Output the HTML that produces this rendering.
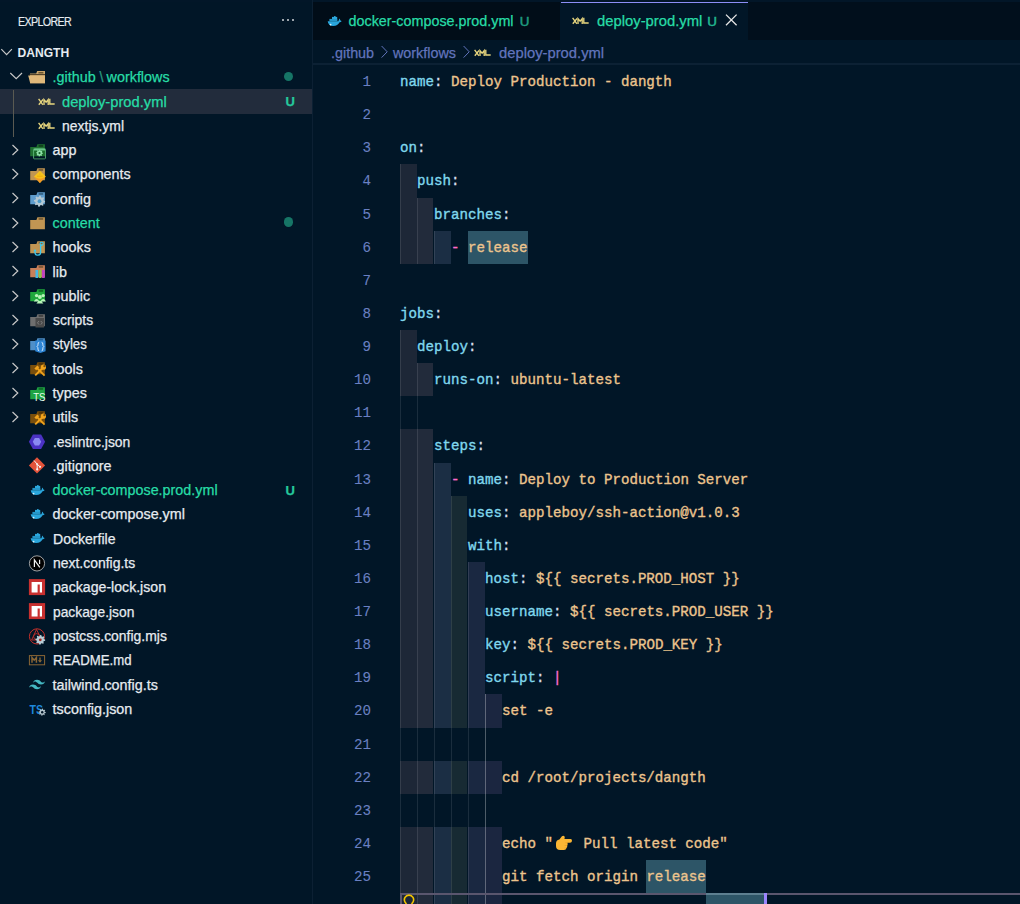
<!DOCTYPE html><html><head><meta charset="utf-8"><style>
*{margin:0;padding:0;box-sizing:border-box}
html,body{width:1020px;height:904px;overflow:hidden;background:#011627}
body{position:relative;font-family:"Liberation Sans",sans-serif}
.a{position:absolute}
svg{overflow:visible}
.sb{font-size:14.35px;white-space:pre;line-height:24.29px;color:#e6ebf0;-webkit-text-stroke:0.25px currentColor}
.code{font-family:"Liberation Mono",monospace;font-size:14.1667px;white-space:pre;line-height:33.125px;color:#d6deeb;-webkit-text-stroke:0.35px currentColor}
.ln{font-family:"Liberation Mono",monospace;font-size:14.1667px;line-height:33.125px;color:#6a80c2;text-align:right;width:60px;-webkit-text-stroke:0.1px currentColor}
.k{color:#80d8ee}.v{color:#ecc48d}.p{color:#d6deeb}.d{color:#ff6bcb}
</style></head><body><div class="a" style="left:0;top:0;width:1020px;height:2px;background:#021628"></div>
<div class="a" style="left:312px;top:0;width:1px;height:904px;background:#0c2033"></div>
<div class="a" style="left:17.5px;top:14px;font-size:12.1px;line-height:16px;letter-spacing:-0.75px;transform:scaleX(0.885);transform-origin:0 0;color:#e6ebf0;-webkit-text-stroke:0.15px currentColor">EXPLORER</div>
<div class="a" style="left:281.5px;top:19px;width:2.4px;height:2.4px;border-radius:50%;background:#d0d4da"></div>
<div class="a" style="left:286.5px;top:19px;width:2.4px;height:2.4px;border-radius:50%;background:#d0d4da"></div>
<div class="a" style="left:291.5px;top:19px;width:2.4px;height:2.4px;border-radius:50%;background:#d0d4da"></div>
<div class="a" style="left:17.5px;top:40.5px;font-size:12.1px;line-height:24px;font-weight:700;color:#e6ebf0">DANGTH</div>
<svg class="a" style="left:0;top:46px" width="14" height="12" viewBox="0 0 14 12"><path d="M1.3 3.2 L6.6 8.6 L11.9 3.2" fill="none" stroke="#c8c8c8" stroke-width="1.2"/></svg>
<div class="a" style="left:0;top:88.84px;width:312px;height:25.09px;background:#222c3c"></div>
<div class="a" style="left:13px;top:89.54px;width:1px;height:47.58px;background:#5a5a52"></div>
<svg class="a" style="left:9px;top:70.25px" width="14" height="12" viewBox="0 0 14 12"><path d="M1.3 3 L7.2 8.6 L13 3" fill="none" stroke="#c8c8c8" stroke-width="1.2"/></svg>
<svg class="a" style="left:29.00px;top:67.85px" width="18" height="18" viewBox="0 0 18 18"><path d="M1 5.6 H7.2 L8.2 3 H16 V15.2 H1 Z" fill="#c9a46a"/><rect x="9.4" y="4" width="5" height="1.5" fill="#6b5530"/><path d="M-0.8 7.4 H16 V15.2 H1.2 Z" fill="#dfb87a"/><path d="M0.4 6.6 H16" stroke="#3a2e1c" stroke-width="0.9"/></svg>
<div class="a sb" style="left:52.6px;top:65.25px;color:#27dca6">.github</div>
<div class="a sb" style="left:99.6px;top:65.25px;color:#2a9a80">\</div>
<div class="a sb" style="left:106.6px;top:65.25px;color:#27dca6">workflows</div>
<div class="a" style="left:284px;top:71.75px;width:9.2px;height:9.2px;border-radius:50%;background:#167566"></div>
<svg class="a" style="left:37.50px;top:92.14px" width="18" height="18" viewBox="0 0 18 18"><g fill="none" stroke="#e8d67e" stroke-width="1.35" stroke-linecap="square"><path d="M1 7.4 L4.4 12.2 M4.6 8 L1.2 12.2"/><path d="M6 12.2 V7.6 L8.1 10.2 L10.2 7.6 V12.2"/><path d="M11.8 7.4 V12 H16"/></g></svg>
<div class="a sb" style="left:61.8px;top:89.54px;color:#27dca6;transform:scaleX(1.0257);transform-origin:0 0">deploy-prod.yml</div>
<div class="a sb" style="left:285.6px;top:90.04px;color:#25c89c;font-weight:700;font-size:13px">U</div>
<svg class="a" style="left:37.50px;top:116.43px" width="18" height="18" viewBox="0 0 18 18"><g fill="none" stroke="#e8d67e" stroke-width="1.35" stroke-linecap="square"><path d="M1 7.4 L4.4 12.2 M4.6 8 L1.2 12.2"/><path d="M6 12.2 V7.6 L8.1 10.2 L10.2 7.6 V12.2"/><path d="M11.8 7.4 V12 H16"/></g></svg>
<div class="a sb" style="left:61.8px;top:113.83px;color:#e6ebf0;transform:scaleX(0.9731);transform-origin:0 0">nextjs.yml</div>
<svg class="a" style="left:10px;top:142.82px" width="12" height="14" viewBox="0 0 12 14"><path d="M2.5 2 L7.8 7 L2.5 12" fill="none" stroke="#c8c8c8" stroke-width="1.2"/></svg>
<svg class="a" style="left:29.00px;top:140.72px" width="18" height="18" viewBox="0 0 18 18"><path d="M1.2 5.9 H7.4 L8.4 3.3 H15.9 V15.3 H1.2 Z" fill="#1f7030"/><rect x="9.6" y="4.2" width="4.6" height="1.5" fill="#0f3a1a"/><rect x="4.6" y="7.6" width="11.8" height="10.2" rx="0.8" fill="#1a6a2a" stroke="#5cb87a" stroke-width="0.9"/><rect x="5" y="8" width="11" height="1.5" fill="#6cc88a"/><rect x="5.2" y="15.3" width="10.8" height="2.1" fill="#011627"/><path d="M10.50 8.70 L11.16 8.77 L11.49 9.70 L11.94 9.94 L12.90 9.70 L13.33 10.21 L12.90 11.11 L13.05 11.59 L13.90 12.10 L13.83 12.76 L12.90 13.09 L12.66 13.54 L12.90 14.50 L12.39 14.93 L11.49 14.50 L11.01 14.65 L10.50 15.50 L9.84 15.43 L9.51 14.50 L9.06 14.26 L8.10 14.50 L7.67 13.99 L8.10 13.09 L7.95 12.61 L7.10 12.10 L7.17 11.44 L8.10 11.11 L8.34 10.66 L8.10 9.70 L8.61 9.27 L9.51 9.70 L9.99 9.55 Z" fill="#8ee0a8"/><circle cx="10.50" cy="12.10" r="1.10" fill="#1a6a2a"/></svg>
<div class="a sb" style="left:52.6px;top:138.12px;color:#e6ebf0;transform:scaleX(1.0000);transform-origin:0 0">app</div>
<svg class="a" style="left:10px;top:167.11px" width="12" height="14" viewBox="0 0 12 14"><path d="M2.5 2 L7.8 7 L2.5 12" fill="none" stroke="#c8c8c8" stroke-width="1.2"/></svg>
<svg class="a" style="left:29.00px;top:165.01px" width="18" height="18" viewBox="0 0 18 18"><path d="M1.2 5.9 H7.4 L8.4 3.3 H15.9 V15.3 H1.2 Z" fill="#c09553"/><rect x="9.6" y="4.2" width="4.6" height="1.5" fill="#6b5330"/><path d="M10.9 5.8 L16.8 11.6 L10.9 18 L5 11.6 Z" fill="#f7c21a"/><path d="M5 11.6 L10.9 18 L16.8 11.6 Q13 14 10.9 13.6 Q8.6 14 5 11.6 Z" fill="#f39a26"/><path d="M8 11.2 H13.8 M10.9 8.6 V9.6" stroke="#e8a000" stroke-width="0.7"/></svg>
<div class="a sb" style="left:52.6px;top:162.41px;color:#e6ebf0;transform:scaleX(1.0000);transform-origin:0 0">components</div>
<svg class="a" style="left:10px;top:191.40px" width="12" height="14" viewBox="0 0 12 14"><path d="M2.5 2 L7.8 7 L2.5 12" fill="none" stroke="#c8c8c8" stroke-width="1.2"/></svg>
<svg class="a" style="left:29.00px;top:189.30px" width="18" height="18" viewBox="0 0 18 18"><path d="M1.2 5.9 H7.4 L8.4 3.3 H15.9 V15.3 H1.2 Z" fill="#5e9ccc"/><rect x="9.6" y="4.2" width="4.6" height="1.5" fill="#2f5a7a"/><path d="M10.50 6.60 L11.59 6.71 L12.11 8.32 L12.83 8.71 L14.46 8.24 L15.16 9.09 L14.38 10.59 L14.62 11.38 L16.10 12.20 L15.99 13.29 L14.38 13.81 L13.99 14.53 L14.46 16.16 L13.61 16.86 L12.11 16.08 L11.32 16.32 L10.50 17.80 L9.41 17.69 L8.89 16.08 L8.17 15.69 L6.54 16.16 L5.84 15.31 L6.62 13.81 L6.38 13.02 L4.90 12.20 L5.01 11.11 L6.62 10.59 L7.01 9.87 L6.54 8.24 L7.39 7.54 L8.89 8.32 L9.68 8.08 Z" fill="#b3c7d2"/><circle cx="10.50" cy="12.20" r="1.90" fill="#4a9ac8"/></svg>
<div class="a sb" style="left:52.6px;top:186.70px;color:#e6ebf0;transform:scaleX(1.0000);transform-origin:0 0">config</div>
<svg class="a" style="left:10px;top:215.69px" width="12" height="14" viewBox="0 0 12 14"><path d="M2.5 2 L7.8 7 L2.5 12" fill="none" stroke="#c8c8c8" stroke-width="1.2"/></svg>
<svg class="a" style="left:29.00px;top:213.59px" width="18" height="18" viewBox="0 0 18 18"><path d="M1.2 5.9 H7.4 L8.4 3.3 H15.9 V15.3 H1.2 Z" fill="#c09553"/><rect x="9.6" y="4.2" width="4.6" height="1.5" fill="#6b5330"/></svg>
<div class="a sb" style="left:52.6px;top:210.99px;color:#27dca6;transform:scaleX(1.0000);transform-origin:0 0">content</div>
<div class="a" style="left:284px;top:217.49px;width:9.2px;height:9.2px;border-radius:50%;background:#167566"></div>
<svg class="a" style="left:10px;top:239.98px" width="12" height="14" viewBox="0 0 12 14"><path d="M2.5 2 L7.8 7 L2.5 12" fill="none" stroke="#c8c8c8" stroke-width="1.2"/></svg>
<svg class="a" style="left:29.00px;top:237.88px" width="18" height="18" viewBox="0 0 18 18"><path d="M1.2 5.9 H7.4 L8.4 3.3 H15.9 V15.3 H1.2 Z" fill="#c09553"/><rect x="9.6" y="4.2" width="4.6" height="1.5" fill="#6b5330"/><path d="M11.6 6.8 V14.4 A2.8 2.8 0 0 1 6 14.4 V12.4" fill="none" stroke="#3cc8ee" stroke-width="1.3"/><circle cx="12.6" cy="5.8" r="1.6" fill="none" stroke="#3cc8ee" stroke-width="1.1"/><path d="M5 13.4 L6 11.6 L7 13.4" fill="none" stroke="#3cc8ee" stroke-width="1"/></svg>
<div class="a sb" style="left:52.6px;top:235.28px;color:#e6ebf0;transform:scaleX(1.0000);transform-origin:0 0">hooks</div>
<svg class="a" style="left:10px;top:264.27px" width="12" height="14" viewBox="0 0 12 14"><path d="M2.5 2 L7.8 7 L2.5 12" fill="none" stroke="#c8c8c8" stroke-width="1.2"/></svg>
<svg class="a" style="left:29.00px;top:262.17px" width="18" height="18" viewBox="0 0 18 18"><path d="M1.2 5.9 H7.4 L8.4 3.3 H15.9 V15.3 H1.2 Z" fill="#c8805a"/><rect x="9.6" y="4.2" width="4.6" height="1.5" fill="#6b5330"/><rect x="6.5" y="8" width="2.6" height="8" fill="#42b8e8"/><rect x="9.8" y="8" width="2.6" height="8" fill="#8bc34a"/><rect x="13.1" y="8" width="2.6" height="8" fill="#c040c8"/></svg>
<div class="a sb" style="left:52.6px;top:259.57px;color:#e6ebf0;transform:scaleX(1.0000);transform-origin:0 0">lib</div>
<svg class="a" style="left:10px;top:288.56px" width="12" height="14" viewBox="0 0 12 14"><path d="M2.5 2 L7.8 7 L2.5 12" fill="none" stroke="#c8c8c8" stroke-width="1.2"/></svg>
<svg class="a" style="left:29.00px;top:286.46px" width="18" height="18" viewBox="0 0 18 18"><path d="M1.2 5.9 H7.4 L8.4 3.3 H15.9 V15.3 H1.2 Z" fill="#1fa83c"/><rect x="9.6" y="4.2" width="4.6" height="1.5" fill="#0e6020"/><circle cx="7.6" cy="9.6" r="1.7" fill="#b8f5b8"/><circle cx="14.2" cy="9.6" r="1.7" fill="#b8f5b8"/><circle cx="10.9" cy="11" r="2" fill="#b8f5b8"/><path d="M4.8 15.4 Q7.6 10.6 10.4 15.4 Z M11.4 15.4 Q14.2 10.6 17 15.4 Z M7.4 17.6 Q10.9 11.8 14.4 17.6 Z" fill="#b8f5b8"/></svg>
<div class="a sb" style="left:52.6px;top:283.86px;color:#e6ebf0;transform:scaleX(1.0000);transform-origin:0 0">public</div>
<svg class="a" style="left:10px;top:312.85px" width="12" height="14" viewBox="0 0 12 14"><path d="M2.5 2 L7.8 7 L2.5 12" fill="none" stroke="#c8c8c8" stroke-width="1.2"/></svg>
<svg class="a" style="left:29.00px;top:310.75px" width="18" height="18" viewBox="0 0 18 18"><path d="M1.2 5.9 H7.4 L8.4 3.3 H15.9 V15.3 H1.2 Z" fill="#6f6f6f"/><rect x="9.6" y="4.2" width="4.6" height="1.5" fill="#3a3a3a"/><path d="M6.5 7 H15 V16.5 H6.5 Z" fill="#4a4a4a"/><path d="M10 10 L8.5 11.8 L10 13.6 M11.8 10 L13.3 11.8 L11.8 13.6" fill="none" stroke="#8a8a8a" stroke-width="0.8"/></svg>
<div class="a sb" style="left:52.6px;top:308.15px;color:#e6ebf0;transform:scaleX(0.9686);transform-origin:0 0">scripts</div>
<svg class="a" style="left:10px;top:337.14px" width="12" height="14" viewBox="0 0 12 14"><path d="M2.5 2 L7.8 7 L2.5 12" fill="none" stroke="#c8c8c8" stroke-width="1.2"/></svg>
<svg class="a" style="left:29.00px;top:335.04px" width="18" height="18" viewBox="0 0 18 18"><path d="M1.2 5.9 H7.4 L8.4 3.3 H15.9 V15.3 H1.2 Z" fill="#4f8fc8"/><rect x="9.6" y="4.2" width="4.6" height="1.5" fill="#1d5a90"/><path d="M6.2 5.4 H16.6 V16.2 L11.4 18 L6.2 16.2 Z" fill="#2d84d4"/><path d="M10.2 7.4 Q8.8 7.4 9 9.2 Q9 11.2 8 11.6 Q9 12 9 14 Q8.8 15.8 10.2 15.8 M12.6 7.4 Q14 7.4 13.8 9.2 Q13.8 11.2 14.8 11.6 Q13.8 12 13.8 14 Q14 15.8 12.6 15.8" fill="none" stroke="#e8f4ff" stroke-width="0.9"/></svg>
<div class="a sb" style="left:52.6px;top:332.44px;color:#e6ebf0;transform:scaleX(0.9225);transform-origin:0 0">styles</div>
<svg class="a" style="left:10px;top:361.43px" width="12" height="14" viewBox="0 0 12 14"><path d="M2.5 2 L7.8 7 L2.5 12" fill="none" stroke="#c8c8c8" stroke-width="1.2"/></svg>
<svg class="a" style="left:29.00px;top:359.33px" width="18" height="18" viewBox="0 0 18 18"><path d="M1.2 5.9 H7.4 L8.4 3.3 H15.9 V15.3 H1.2 Z" fill="#7a4f0c"/><rect x="9.6" y="4.2" width="4.6" height="1.5" fill="#4a3008"/><path d="M6.2 16.4 L13.4 9.2" stroke="#f2a41c" stroke-width="2"/><circle cx="14.4" cy="8.2" r="2.6" fill="#f2a41c"/><circle cx="15.4" cy="7.2" r="1.1" fill="#7a4f0c"/><path d="M7.6 8.6 L15.6 16.6" stroke="#f2a41c" stroke-width="1.9"/><path d="M5.4 9.4 L8.4 6.4 L10.2 8.2 L7.2 11.2 Z" fill="#f2a41c"/></svg>
<div class="a sb" style="left:52.6px;top:356.73px;color:#e6ebf0;transform:scaleX(1.0000);transform-origin:0 0">tools</div>
<svg class="a" style="left:10px;top:385.72px" width="12" height="14" viewBox="0 0 12 14"><path d="M2.5 2 L7.8 7 L2.5 12" fill="none" stroke="#c8c8c8" stroke-width="1.2"/></svg>
<svg class="a" style="left:29.00px;top:383.62px" width="18" height="18" viewBox="0 0 18 18"><path d="M1.2 5.9 H7.4 L8.4 3.3 H15.9 V15.3 H1.2 Z" fill="#1fa444"/><rect x="9.6" y="4.2" width="4.6" height="1.5" fill="#0e6024"/><text x="4.2" y="17.2" font-family="Liberation Sans" font-size="10.5" fill="#e6ffee" textLength="12.4" lengthAdjust="spacingAndGlyphs">TS</text></svg>
<div class="a sb" style="left:52.6px;top:381.02px;color:#e6ebf0;transform:scaleX(1.0000);transform-origin:0 0">types</div>
<svg class="a" style="left:10px;top:410.01px" width="12" height="14" viewBox="0 0 12 14"><path d="M2.5 2 L7.8 7 L2.5 12" fill="none" stroke="#c8c8c8" stroke-width="1.2"/></svg>
<svg class="a" style="left:29.00px;top:407.91px" width="18" height="18" viewBox="0 0 18 18"><path d="M1.2 5.9 H7.4 L8.4 3.3 H15.9 V15.3 H1.2 Z" fill="#7a4f0c"/><rect x="9.6" y="4.2" width="4.6" height="1.5" fill="#4a3008"/><path d="M6.2 16.4 L13.4 9.2" stroke="#f2a41c" stroke-width="2"/><circle cx="14.4" cy="8.2" r="2.6" fill="#f2a41c"/><circle cx="15.4" cy="7.2" r="1.1" fill="#7a4f0c"/><path d="M7.6 8.6 L15.6 16.6" stroke="#f2a41c" stroke-width="1.9"/><path d="M5.4 9.4 L8.4 6.4 L10.2 8.2 L7.2 11.2 Z" fill="#f2a41c"/></svg>
<div class="a sb" style="left:52.6px;top:405.31px;color:#e6ebf0;transform:scaleX(1.0000);transform-origin:0 0">utils</div>
<svg class="a" style="left:29.00px;top:432.20px" width="18" height="18" viewBox="0 0 18 18"><path d="M3.9 2.5 H12.1 L16.1 9.7 L12.1 16.9 H3.9 L-0.1 9.7 Z" fill="#4b32c3"/><path d="M5.9 6 H10.1 L12.2 9.7 L10.1 13.4 H5.9 L3.8 9.7 Z" fill="#8a8af2"/></svg>
<div class="a sb" style="left:52.6px;top:429.60px;color:#e6ebf0;transform:scaleX(0.9698);transform-origin:0 0">.eslintrc.json</div>
<svg class="a" style="left:29.00px;top:456.49px" width="18" height="18" viewBox="0 0 18 18"><path d="M8 1.3 L16.1 9.4 L8 17.5 L-0.1 9.4 Z" fill="#e4533a"/><path d="M5 4.5 L8.2 8.2 V13.4 M8.2 8.2 L11 10.8" fill="none" stroke="#f4f4f4" stroke-width="1"/><circle cx="8.2" cy="13.4" r="1.1" fill="#f4f4f4"/><circle cx="11" cy="10.8" r="1.1" fill="#f4f4f4"/><circle cx="8.2" cy="8.2" r="1" fill="#f4f4f4"/></svg>
<div class="a sb" style="left:52.6px;top:453.89px;color:#e6ebf0;transform:scaleX(1.0000);transform-origin:0 0">.gitignore</div>
<svg class="a" style="left:29.00px;top:480.78px" width="18" height="18" viewBox="0 0 18 18"><path d="M1.7 9.2 H12.4 Q13 7.8 13.2 6.6 Q14.3 7.4 14.3 8.6 Q15.2 8.5 15.6 9.2 Q14.8 10.3 13.6 10.3 Q11.8 14 7.2 14 Q2.2 14 1.7 9.2 Z" fill="#2aa6dc"/><rect x="3.4" y="6.9" width="8" height="2.4" fill="#2496c8"/><rect x="6" y="4.9" width="5.2" height="2.2" fill="#2aa6dc"/><rect x="8.2" y="4" width="1.3" height="1.4" fill="#36b6ea"/><circle cx="4.6" cy="12.6" r="0.9" fill="#d8f2ff"/></svg>
<div class="a sb" style="left:52.6px;top:478.18px;color:#27dca6;transform:scaleX(1.0000);transform-origin:0 0">docker-compose.prod.yml</div>
<div class="a sb" style="left:285.6px;top:478.68px;color:#25c89c;font-weight:700;font-size:13px">U</div>
<svg class="a" style="left:29.00px;top:505.07px" width="18" height="18" viewBox="0 0 18 18"><path d="M1.7 9.2 H12.4 Q13 7.8 13.2 6.6 Q14.3 7.4 14.3 8.6 Q15.2 8.5 15.6 9.2 Q14.8 10.3 13.6 10.3 Q11.8 14 7.2 14 Q2.2 14 1.7 9.2 Z" fill="#2aa6dc"/><rect x="3.4" y="6.9" width="8" height="2.4" fill="#2496c8"/><rect x="6" y="4.9" width="5.2" height="2.2" fill="#2aa6dc"/><rect x="8.2" y="4" width="1.3" height="1.4" fill="#36b6ea"/><circle cx="4.6" cy="12.6" r="0.9" fill="#d8f2ff"/></svg>
<div class="a sb" style="left:52.6px;top:502.47px;color:#e6ebf0;transform:scaleX(1.0000);transform-origin:0 0">docker-compose.yml</div>
<svg class="a" style="left:29.00px;top:529.36px" width="18" height="18" viewBox="0 0 18 18"><path d="M1.7 9.2 H12.4 Q13 7.8 13.2 6.6 Q14.3 7.4 14.3 8.6 Q15.2 8.5 15.6 9.2 Q14.8 10.3 13.6 10.3 Q11.8 14 7.2 14 Q2.2 14 1.7 9.2 Z" fill="#2aa6dc"/><rect x="3.4" y="6.9" width="8" height="2.4" fill="#2496c8"/><rect x="6" y="4.9" width="5.2" height="2.2" fill="#2aa6dc"/><rect x="8.2" y="4" width="1.3" height="1.4" fill="#36b6ea"/><circle cx="4.6" cy="12.6" r="0.9" fill="#d8f2ff"/></svg>
<div class="a sb" style="left:52.6px;top:526.76px;color:#e6ebf0;transform:scaleX(0.9798);transform-origin:0 0">Dockerfile</div>
<svg class="a" style="left:29.00px;top:553.65px" width="18" height="18" viewBox="0 0 18 18"><circle cx="8" cy="9.4" r="7.6" fill="#000" stroke="#c8c8c8" stroke-width="0.8"/><path d="M5.4 13 V5.8 L10.8 13.4 M10.6 5.8 V10" fill="none" stroke="#f0f0f0" stroke-width="1.2"/></svg>
<div class="a sb" style="left:52.6px;top:551.05px;color:#e6ebf0;transform:scaleX(0.9719);transform-origin:0 0">next.config.ts</div>
<svg class="a" style="left:29.00px;top:577.94px" width="18" height="18" viewBox="0 0 18 18"><rect x="-0.1" y="1.1" width="16.2" height="16" fill="#c8302f"/><path d="M2.6 3.9 H13 V14.4 H10.8 V6.4 H8.6 V14.4 H2.6 Z" fill="#ffffff"/></svg>
<div class="a sb" style="left:52.6px;top:575.34px;color:#e6ebf0;transform:scaleX(0.9843);transform-origin:0 0">package-lock.json</div>
<svg class="a" style="left:29.00px;top:602.23px" width="18" height="18" viewBox="0 0 18 18"><rect x="-0.1" y="1.1" width="16.2" height="16" fill="#c8302f"/><path d="M2.6 3.9 H13 V14.4 H10.8 V6.4 H8.6 V14.4 H2.6 Z" fill="#ffffff"/></svg>
<div class="a sb" style="left:52.6px;top:599.63px;color:#e6ebf0;transform:scaleX(0.9621);transform-origin:0 0">package.json</div>
<svg class="a" style="left:29.00px;top:626.52px" width="18" height="18" viewBox="0 0 18 18"><circle cx="8" cy="9.4" r="7.6" fill="none" stroke="#c8302a" stroke-width="1"/><path d="M7.5 2.5 L2.6 13 H12.8 Z" fill="none" stroke="#c8302a" stroke-width="0.9"/><circle cx="7.6" cy="9.6" r="3" fill="none" stroke="#c8302a" stroke-width="0.8"/><path d="M11.30 7.90 L12.26 7.99 L12.72 9.38 L13.36 9.72 L14.76 9.34 L15.37 10.08 L14.72 11.38 L14.93 12.08 L16.20 12.80 L16.11 13.76 L14.72 14.22 L14.38 14.86 L14.76 16.26 L14.02 16.87 L12.72 16.22 L12.02 16.43 L11.30 17.70 L10.34 17.61 L9.88 16.22 L9.24 15.88 L7.84 16.26 L7.23 15.52 L7.88 14.22 L7.67 13.52 L6.40 12.80 L6.49 11.84 L7.88 11.38 L8.22 10.74 L7.84 9.34 L8.58 8.73 L9.88 9.38 L10.58 9.17 Z" fill="#b7cdd6"/><circle cx="11.30" cy="12.80" r="1.40" fill="#a02820"/></svg>
<div class="a sb" style="left:52.6px;top:623.92px;color:#e6ebf0;transform:scaleX(0.9719);transform-origin:0 0">postcss.config.mjs</div>
<svg class="a" style="left:29.00px;top:650.81px" width="18" height="18" viewBox="0 0 18 18"><rect x="0.4" y="4.6" width="15.2" height="9.2" fill="none" stroke="#8a6636" stroke-width="1"/><path d="M3 11.8 V6.6 L5.2 9.2 L7.4 6.6 V11.8" fill="none" stroke="#8a6636" stroke-width="1.5"/><path d="M11 6.4 V10.6" stroke="#8a6636" stroke-width="1.4"/><path d="M8.9 9.2 L11 11.8 L13.1 9.2 Z" fill="#8a6636"/></svg>
<div class="a sb" style="left:52.6px;top:648.21px;color:#e6ebf0;transform:scaleX(0.9204);transform-origin:0 0">README.md</div>
<svg class="a" style="left:29.00px;top:675.10px" width="18" height="18" viewBox="0 0 18 18"><g transform="translate(0,1.5) scale(0.667)"><path d="M12.001,4.8c-3.2,0-5.2,1.6-6,4.8c1.2-1.6,2.6-2.2,4.2-1.8c0.913,0.228,1.565,0.89,2.288,1.624C13.666,10.618,15.027,12,18.001,12c3.2,0,5.2-1.6,6-4.8c-1.2,1.6-2.6,2.2-4.2,1.8c-0.913-0.228-1.565-0.89-2.288-1.624C16.337,6.182,14.976,4.8,12.001,4.8z M6.001,12c-3.2,0-5.2,1.6-6,4.8c1.2-1.6,2.6-2.2,4.2-1.8c0.913,0.228,1.565,0.89,2.288,1.624c1.177,1.194,2.538,2.576,5.512,2.576c3.2,0,5.2-1.6,6-4.8c-1.2,1.6-2.6,2.2-4.2,1.8c-0.913-0.228-1.565-0.89-2.288-1.624C10.337,13.382,8.976,12,6.001,12z" fill="#44b8c2"/></g></svg>
<div class="a sb" style="left:52.6px;top:672.50px;color:#e6ebf0;transform:scaleX(1.0000);transform-origin:0 0">tailwind.config.ts</div>
<svg class="a" style="left:29.00px;top:699.39px" width="18" height="18" viewBox="0 0 18 18"><text x="0.6" y="14.8" font-family="Liberation Sans" font-weight="700" font-size="13.4" fill="#1e88dc" textLength="13.6" lengthAdjust="spacingAndGlyphs">TS</text><path d="M13.20 9.60 L13.90 9.67 L14.19 10.80 L14.64 11.04 L15.75 10.65 L16.19 11.20 L15.60 12.21 L15.75 12.69 L16.80 13.20 L16.73 13.90 L15.60 14.19 L15.36 14.64 L15.75 15.75 L15.20 16.19 L14.19 15.60 L13.71 15.75 L13.20 16.80 L12.50 16.73 L12.21 15.60 L11.76 15.36 L10.65 15.75 L10.21 15.20 L10.80 14.19 L10.65 13.71 L9.60 13.20 L9.67 12.50 L10.80 12.21 L11.04 11.76 L10.65 10.65 L11.20 10.21 L12.21 10.80 L12.69 10.65 Z" fill="#b3c3cc"/><circle cx="13.20" cy="13.20" r="1.20" fill="#011627"/></svg>
<div class="a sb" style="left:52.6px;top:696.79px;color:#e6ebf0;transform:scaleX(1.0000);transform-origin:0 0">tsconfig.json</div>
<div class="a" style="left:313px;top:2px;width:707px;height:38px;background:#010f1c"></div>
<div class="a" style="left:313px;top:2px;width:247px;height:38px;background:#010d18"></div>
<svg class="a" style="left:326.00px;top:12.00px" width="18" height="18" viewBox="0 0 18 18"><path d="M1.7 9.2 H12.4 Q13 7.8 13.2 6.6 Q14.3 7.4 14.3 8.6 Q15.2 8.5 15.6 9.2 Q14.8 10.3 13.6 10.3 Q11.8 14 7.2 14 Q2.2 14 1.7 9.2 Z" fill="#2aa6dc"/><rect x="3.4" y="6.9" width="8" height="2.4" fill="#2496c8"/><rect x="6" y="4.9" width="5.2" height="2.2" fill="#2aa6dc"/><rect x="8.2" y="4" width="1.3" height="1.4" fill="#36b6ea"/><circle cx="4.6" cy="12.6" r="0.9" fill="#d8f2ff"/></svg>
<div class="a sb" style="left:348.5px;top:9px;line-height:24px;color:#27dca6">docker-compose.prod.yml</div>
<div class="a sb" style="left:519.8px;top:10px;line-height:24px;color:#1f9e80;font-size:13.4px;-webkit-text-stroke:0.5px currentColor">U</div>
<div class="a" style="left:560px;top:2px;width:188px;height:38px;background:#011627"></div>
<div class="a" style="left:561px;top:2px;width:187px;height:1px;background:#8c8ef6"></div>
<svg class="a" style="left:572.00px;top:11.00px" width="18" height="18" viewBox="0 0 18 18"><g fill="none" stroke="#e8d67e" stroke-width="1.35" stroke-linecap="square"><path d="M1 7.4 L4.4 12.2 M4.6 8 L1.2 12.2"/><path d="M6 12.2 V7.6 L8.1 10.2 L10.2 7.6 V12.2"/><path d="M11.8 7.4 V12 H16"/></g></svg>
<div class="a sb" style="left:596.5px;top:9px;line-height:24px;color:#27dca6;transform:scaleX(1.033);transform-origin:0 0">deploy-prod.yml</div>
<div class="a sb" style="left:707.3px;top:10px;line-height:24px;color:#22b890;font-size:13.4px;-webkit-text-stroke:0.5px currentColor">U</div>
<svg class="a" style="left:724px;top:13px" width="15" height="14" viewBox="0 0 15 14"><path d="M2 1.6 L12.6 12.2 M12.6 1.6 L2 12.2" stroke="#e6e6e6" stroke-width="1.3"/></svg>
<div class="a" style="left:313px;top:63px;width:707px;height:1.5px;background:#0c2134"></div>
<div class="a sb" style="left:331px;top:41px;line-height:24px;color:#6174bc">.github</div>
<svg class="a" style="left:379px;top:45px" width="10" height="14" viewBox="0 0 10 14"><path d="M2.6 1 L8.2 6.8 L2.6 12.6" fill="none" stroke="#6174bc" stroke-width="1"/></svg>
<div class="a sb" style="left:393px;top:41px;line-height:24px;color:#6174bc">workflows</div>
<svg class="a" style="left:461px;top:45px" width="10" height="14" viewBox="0 0 10 14"><path d="M2.6 1 L8.2 6.8 L2.6 12.6" fill="none" stroke="#6174bc" stroke-width="1"/></svg>
<svg class="a" style="left:474.00px;top:43.00px" width="18" height="18" viewBox="0 0 18 18"><g fill="none" stroke="#e8d67e" stroke-width="1.35" stroke-linecap="square"><path d="M1 7.4 L4.4 12.2 M4.6 8 L1.2 12.2"/><path d="M6 12.2 V7.6 L8.1 10.2 L10.2 7.6 V12.2"/><path d="M11.8 7.4 V12 H16"/></g></svg>
<div class="a sb" style="left:498.5px;top:41px;line-height:24px;color:#6174bc;transform:scaleX(1.03);transform-origin:0 0">deploy-prod.yml</div>
<div class="a" style="left:468px;top:230.62px;width:60px;height:33.125px;background:#2d5567"></div>
<div class="a" style="left:646px;top:860.00px;width:60px;height:33.125px;background:#2d5567"></div>
<div class="a" style="left:400px;top:164.375px;width:17px;height:33.125px;background:#1d2737"></div>
<div class="a" style="left:400px;top:164.375px;width:1px;height:33.125px;background:rgba(255,255,255,0.1)"></div>
<div class="a" style="left:400px;top:197.500px;width:17px;height:33.125px;background:#1d2737"></div>
<div class="a" style="left:417px;top:197.500px;width:16px;height:33.125px;background:#222b3b"></div>
<div class="a" style="left:400px;top:197.500px;width:1px;height:33.125px;background:rgba(255,255,255,0.1)"></div>
<div class="a" style="left:417px;top:197.500px;width:1px;height:33.125px;background:rgba(255,255,255,0.1)"></div>
<div class="a" style="left:400px;top:230.625px;width:17px;height:33.125px;background:#1d2737"></div>
<div class="a" style="left:417px;top:230.625px;width:16px;height:33.125px;background:#222b3b"></div>
<div class="a" style="left:434px;top:230.625px;width:17px;height:33.125px;background:#1b2e44"></div>
<div class="a" style="left:400px;top:230.625px;width:1px;height:33.125px;background:rgba(255,255,255,0.1)"></div>
<div class="a" style="left:417px;top:230.625px;width:1px;height:33.125px;background:rgba(255,255,255,0.1)"></div>
<div class="a" style="left:434px;top:230.625px;width:1px;height:33.125px;background:rgba(255,255,255,0.1)"></div>
<div class="a" style="left:400px;top:330.000px;width:17px;height:33.125px;background:#1d2737"></div>
<div class="a" style="left:400px;top:330.000px;width:1px;height:33.125px;background:rgba(255,255,255,0.1)"></div>
<div class="a" style="left:400px;top:363.125px;width:17px;height:33.125px;background:#1d2737"></div>
<div class="a" style="left:417px;top:363.125px;width:16px;height:33.125px;background:#222b3b"></div>
<div class="a" style="left:400px;top:363.125px;width:1px;height:33.125px;background:rgba(255,255,255,0.1)"></div>
<div class="a" style="left:417px;top:363.125px;width:1px;height:33.125px;background:rgba(255,255,255,0.1)"></div>
<div class="a" style="left:400px;top:396.250px;width:1px;height:33.125px;background:rgba(255,255,255,0.1)"></div>
<div class="a" style="left:417px;top:396.250px;width:1px;height:33.125px;background:rgba(255,255,255,0.1)"></div>
<div class="a" style="left:400px;top:429.375px;width:17px;height:33.125px;background:#1d2737"></div>
<div class="a" style="left:417px;top:429.375px;width:16px;height:33.125px;background:#222b3b"></div>
<div class="a" style="left:400px;top:429.375px;width:1px;height:33.125px;background:rgba(255,255,255,0.1)"></div>
<div class="a" style="left:417px;top:429.375px;width:1px;height:33.125px;background:rgba(255,255,255,0.1)"></div>
<div class="a" style="left:400px;top:462.500px;width:17px;height:33.125px;background:#1d2737"></div>
<div class="a" style="left:417px;top:462.500px;width:16px;height:33.125px;background:#222b3b"></div>
<div class="a" style="left:434px;top:462.500px;width:17px;height:33.125px;background:#1b2e44"></div>
<div class="a" style="left:400px;top:462.500px;width:1px;height:33.125px;background:rgba(255,255,255,0.1)"></div>
<div class="a" style="left:417px;top:462.500px;width:1px;height:33.125px;background:rgba(255,255,255,0.1)"></div>
<div class="a" style="left:434px;top:462.500px;width:1px;height:33.125px;background:rgba(255,255,255,0.1)"></div>
<div class="a" style="left:400px;top:495.625px;width:17px;height:33.125px;background:#1d2737"></div>
<div class="a" style="left:417px;top:495.625px;width:16px;height:33.125px;background:#222b3b"></div>
<div class="a" style="left:434px;top:495.625px;width:17px;height:33.125px;background:#1b2e44"></div>
<div class="a" style="left:451px;top:495.625px;width:16px;height:33.125px;background:#172a33"></div>
<div class="a" style="left:400px;top:495.625px;width:1px;height:33.125px;background:rgba(255,255,255,0.1)"></div>
<div class="a" style="left:417px;top:495.625px;width:1px;height:33.125px;background:rgba(255,255,255,0.1)"></div>
<div class="a" style="left:434px;top:495.625px;width:1px;height:33.125px;background:rgba(255,255,255,0.1)"></div>
<div class="a" style="left:451px;top:495.625px;width:1px;height:33.125px;background:rgba(255,255,255,0.1)"></div>
<div class="a" style="left:400px;top:528.750px;width:17px;height:33.125px;background:#1d2737"></div>
<div class="a" style="left:417px;top:528.750px;width:16px;height:33.125px;background:#222b3b"></div>
<div class="a" style="left:434px;top:528.750px;width:17px;height:33.125px;background:#1b2e44"></div>
<div class="a" style="left:451px;top:528.750px;width:16px;height:33.125px;background:#172a33"></div>
<div class="a" style="left:400px;top:528.750px;width:1px;height:33.125px;background:rgba(255,255,255,0.1)"></div>
<div class="a" style="left:417px;top:528.750px;width:1px;height:33.125px;background:rgba(255,255,255,0.1)"></div>
<div class="a" style="left:434px;top:528.750px;width:1px;height:33.125px;background:rgba(255,255,255,0.1)"></div>
<div class="a" style="left:451px;top:528.750px;width:1px;height:33.125px;background:rgba(255,255,255,0.1)"></div>
<div class="a" style="left:400px;top:561.875px;width:17px;height:33.125px;background:#1d2737"></div>
<div class="a" style="left:417px;top:561.875px;width:16px;height:33.125px;background:#222b3b"></div>
<div class="a" style="left:434px;top:561.875px;width:17px;height:33.125px;background:#1b2e44"></div>
<div class="a" style="left:451px;top:561.875px;width:16px;height:33.125px;background:#172a33"></div>
<div class="a" style="left:468px;top:561.875px;width:17px;height:33.125px;background:#1a2841"></div>
<div class="a" style="left:400px;top:561.875px;width:1px;height:33.125px;background:rgba(255,255,255,0.1)"></div>
<div class="a" style="left:417px;top:561.875px;width:1px;height:33.125px;background:rgba(255,255,255,0.1)"></div>
<div class="a" style="left:434px;top:561.875px;width:1px;height:33.125px;background:rgba(255,255,255,0.1)"></div>
<div class="a" style="left:451px;top:561.875px;width:1px;height:33.125px;background:rgba(255,255,255,0.1)"></div>
<div class="a" style="left:468px;top:561.875px;width:1px;height:33.125px;background:rgba(255,255,255,0.1)"></div>
<div class="a" style="left:400px;top:595.000px;width:17px;height:33.125px;background:#1d2737"></div>
<div class="a" style="left:417px;top:595.000px;width:16px;height:33.125px;background:#222b3b"></div>
<div class="a" style="left:434px;top:595.000px;width:17px;height:33.125px;background:#1b2e44"></div>
<div class="a" style="left:451px;top:595.000px;width:16px;height:33.125px;background:#172a33"></div>
<div class="a" style="left:468px;top:595.000px;width:17px;height:33.125px;background:#1a2841"></div>
<div class="a" style="left:400px;top:595.000px;width:1px;height:33.125px;background:rgba(255,255,255,0.1)"></div>
<div class="a" style="left:417px;top:595.000px;width:1px;height:33.125px;background:rgba(255,255,255,0.1)"></div>
<div class="a" style="left:434px;top:595.000px;width:1px;height:33.125px;background:rgba(255,255,255,0.1)"></div>
<div class="a" style="left:451px;top:595.000px;width:1px;height:33.125px;background:rgba(255,255,255,0.1)"></div>
<div class="a" style="left:468px;top:595.000px;width:1px;height:33.125px;background:rgba(255,255,255,0.1)"></div>
<div class="a" style="left:400px;top:628.125px;width:17px;height:33.125px;background:#1d2737"></div>
<div class="a" style="left:417px;top:628.125px;width:16px;height:33.125px;background:#222b3b"></div>
<div class="a" style="left:434px;top:628.125px;width:17px;height:33.125px;background:#1b2e44"></div>
<div class="a" style="left:451px;top:628.125px;width:16px;height:33.125px;background:#172a33"></div>
<div class="a" style="left:468px;top:628.125px;width:17px;height:33.125px;background:#1a2841"></div>
<div class="a" style="left:400px;top:628.125px;width:1px;height:33.125px;background:rgba(255,255,255,0.1)"></div>
<div class="a" style="left:417px;top:628.125px;width:1px;height:33.125px;background:rgba(255,255,255,0.1)"></div>
<div class="a" style="left:434px;top:628.125px;width:1px;height:33.125px;background:rgba(255,255,255,0.1)"></div>
<div class="a" style="left:451px;top:628.125px;width:1px;height:33.125px;background:rgba(255,255,255,0.1)"></div>
<div class="a" style="left:468px;top:628.125px;width:1px;height:33.125px;background:rgba(255,255,255,0.1)"></div>
<div class="a" style="left:400px;top:661.250px;width:17px;height:33.125px;background:#1d2737"></div>
<div class="a" style="left:417px;top:661.250px;width:16px;height:33.125px;background:#222b3b"></div>
<div class="a" style="left:434px;top:661.250px;width:17px;height:33.125px;background:#1b2e44"></div>
<div class="a" style="left:451px;top:661.250px;width:16px;height:33.125px;background:#172a33"></div>
<div class="a" style="left:468px;top:661.250px;width:17px;height:33.125px;background:#1a2841"></div>
<div class="a" style="left:400px;top:661.250px;width:1px;height:33.125px;background:rgba(255,255,255,0.1)"></div>
<div class="a" style="left:417px;top:661.250px;width:1px;height:33.125px;background:rgba(255,255,255,0.1)"></div>
<div class="a" style="left:434px;top:661.250px;width:1px;height:33.125px;background:rgba(255,255,255,0.1)"></div>
<div class="a" style="left:451px;top:661.250px;width:1px;height:33.125px;background:rgba(255,255,255,0.1)"></div>
<div class="a" style="left:468px;top:661.250px;width:1px;height:33.125px;background:rgba(255,255,255,0.1)"></div>
<div class="a" style="left:400px;top:694.375px;width:17px;height:33.125px;background:#1d2737"></div>
<div class="a" style="left:417px;top:694.375px;width:16px;height:33.125px;background:#222b3b"></div>
<div class="a" style="left:434px;top:694.375px;width:17px;height:33.125px;background:#1b2e44"></div>
<div class="a" style="left:451px;top:694.375px;width:16px;height:33.125px;background:#172a33"></div>
<div class="a" style="left:468px;top:694.375px;width:17px;height:33.125px;background:#1a2841"></div>
<div class="a" style="left:485px;top:694.375px;width:17px;height:33.125px;background:#1b2640"></div>
<div class="a" style="left:400px;top:694.375px;width:1px;height:33.125px;background:rgba(255,255,255,0.1)"></div>
<div class="a" style="left:417px;top:694.375px;width:1px;height:33.125px;background:rgba(255,255,255,0.1)"></div>
<div class="a" style="left:434px;top:694.375px;width:1px;height:33.125px;background:rgba(255,255,255,0.1)"></div>
<div class="a" style="left:451px;top:694.375px;width:1px;height:33.125px;background:rgba(255,255,255,0.1)"></div>
<div class="a" style="left:468px;top:694.375px;width:1px;height:33.125px;background:rgba(255,255,255,0.1)"></div>
<div class="a" style="left:485px;top:694.375px;width:1px;height:33.125px;background:rgba(255,255,255,0.3)"></div>
<div class="a" style="left:400px;top:727.500px;width:1px;height:33.125px;background:rgba(255,255,255,0.1)"></div>
<div class="a" style="left:417px;top:727.500px;width:1px;height:33.125px;background:rgba(255,255,255,0.1)"></div>
<div class="a" style="left:434px;top:727.500px;width:1px;height:33.125px;background:rgba(255,255,255,0.1)"></div>
<div class="a" style="left:451px;top:727.500px;width:1px;height:33.125px;background:rgba(255,255,255,0.1)"></div>
<div class="a" style="left:468px;top:727.500px;width:1px;height:33.125px;background:rgba(255,255,255,0.1)"></div>
<div class="a" style="left:485px;top:727.500px;width:1px;height:33.125px;background:rgba(255,255,255,0.3)"></div>
<div class="a" style="left:400px;top:760.625px;width:17px;height:33.125px;background:#1d2737"></div>
<div class="a" style="left:417px;top:760.625px;width:16px;height:33.125px;background:#222b3b"></div>
<div class="a" style="left:434px;top:760.625px;width:17px;height:33.125px;background:#1b2e44"></div>
<div class="a" style="left:451px;top:760.625px;width:16px;height:33.125px;background:#172a33"></div>
<div class="a" style="left:468px;top:760.625px;width:17px;height:33.125px;background:#1a2841"></div>
<div class="a" style="left:485px;top:760.625px;width:17px;height:33.125px;background:#1b2640"></div>
<div class="a" style="left:400px;top:760.625px;width:1px;height:33.125px;background:rgba(255,255,255,0.1)"></div>
<div class="a" style="left:417px;top:760.625px;width:1px;height:33.125px;background:rgba(255,255,255,0.1)"></div>
<div class="a" style="left:434px;top:760.625px;width:1px;height:33.125px;background:rgba(255,255,255,0.1)"></div>
<div class="a" style="left:451px;top:760.625px;width:1px;height:33.125px;background:rgba(255,255,255,0.1)"></div>
<div class="a" style="left:468px;top:760.625px;width:1px;height:33.125px;background:rgba(255,255,255,0.1)"></div>
<div class="a" style="left:485px;top:760.625px;width:1px;height:33.125px;background:rgba(255,255,255,0.3)"></div>
<div class="a" style="left:400px;top:793.750px;width:1px;height:33.125px;background:rgba(255,255,255,0.1)"></div>
<div class="a" style="left:417px;top:793.750px;width:1px;height:33.125px;background:rgba(255,255,255,0.1)"></div>
<div class="a" style="left:434px;top:793.750px;width:1px;height:33.125px;background:rgba(255,255,255,0.1)"></div>
<div class="a" style="left:451px;top:793.750px;width:1px;height:33.125px;background:rgba(255,255,255,0.1)"></div>
<div class="a" style="left:468px;top:793.750px;width:1px;height:33.125px;background:rgba(255,255,255,0.1)"></div>
<div class="a" style="left:485px;top:793.750px;width:1px;height:33.125px;background:rgba(255,255,255,0.3)"></div>
<div class="a" style="left:400px;top:826.875px;width:17px;height:33.125px;background:#1d2737"></div>
<div class="a" style="left:417px;top:826.875px;width:16px;height:33.125px;background:#222b3b"></div>
<div class="a" style="left:434px;top:826.875px;width:17px;height:33.125px;background:#1b2e44"></div>
<div class="a" style="left:451px;top:826.875px;width:16px;height:33.125px;background:#172a33"></div>
<div class="a" style="left:468px;top:826.875px;width:17px;height:33.125px;background:#1a2841"></div>
<div class="a" style="left:485px;top:826.875px;width:17px;height:33.125px;background:#1b2640"></div>
<div class="a" style="left:400px;top:826.875px;width:1px;height:33.125px;background:rgba(255,255,255,0.1)"></div>
<div class="a" style="left:417px;top:826.875px;width:1px;height:33.125px;background:rgba(255,255,255,0.1)"></div>
<div class="a" style="left:434px;top:826.875px;width:1px;height:33.125px;background:rgba(255,255,255,0.1)"></div>
<div class="a" style="left:451px;top:826.875px;width:1px;height:33.125px;background:rgba(255,255,255,0.1)"></div>
<div class="a" style="left:468px;top:826.875px;width:1px;height:33.125px;background:rgba(255,255,255,0.1)"></div>
<div class="a" style="left:485px;top:826.875px;width:1px;height:33.125px;background:rgba(255,255,255,0.3)"></div>
<div class="a" style="left:400px;top:860.000px;width:17px;height:33.125px;background:#1d2737"></div>
<div class="a" style="left:417px;top:860.000px;width:16px;height:33.125px;background:#222b3b"></div>
<div class="a" style="left:434px;top:860.000px;width:17px;height:33.125px;background:#1b2e44"></div>
<div class="a" style="left:451px;top:860.000px;width:16px;height:33.125px;background:#172a33"></div>
<div class="a" style="left:468px;top:860.000px;width:17px;height:33.125px;background:#1a2841"></div>
<div class="a" style="left:485px;top:860.000px;width:17px;height:33.125px;background:#1b2640"></div>
<div class="a" style="left:400px;top:860.000px;width:1px;height:33.125px;background:rgba(255,255,255,0.1)"></div>
<div class="a" style="left:417px;top:860.000px;width:1px;height:33.125px;background:rgba(255,255,255,0.1)"></div>
<div class="a" style="left:434px;top:860.000px;width:1px;height:33.125px;background:rgba(255,255,255,0.1)"></div>
<div class="a" style="left:451px;top:860.000px;width:1px;height:33.125px;background:rgba(255,255,255,0.1)"></div>
<div class="a" style="left:468px;top:860.000px;width:1px;height:33.125px;background:rgba(255,255,255,0.1)"></div>
<div class="a" style="left:485px;top:860.000px;width:1px;height:33.125px;background:rgba(255,255,255,0.3)"></div>
<div class="a" style="left:400px;top:893.125px;width:17px;height:33.125px;background:#1d2737"></div>
<div class="a" style="left:417px;top:893.125px;width:16px;height:33.125px;background:#222b3b"></div>
<div class="a" style="left:434px;top:893.125px;width:17px;height:33.125px;background:#1b2e44"></div>
<div class="a" style="left:451px;top:893.125px;width:16px;height:33.125px;background:#172a33"></div>
<div class="a" style="left:468px;top:893.125px;width:17px;height:33.125px;background:#1a2841"></div>
<div class="a" style="left:485px;top:893.125px;width:17px;height:33.125px;background:#1b2640"></div>
<div class="a" style="left:400px;top:893.125px;width:1px;height:33.125px;background:rgba(255,255,255,0.1)"></div>
<div class="a" style="left:417px;top:893.125px;width:1px;height:33.125px;background:rgba(255,255,255,0.1)"></div>
<div class="a" style="left:434px;top:893.125px;width:1px;height:33.125px;background:rgba(255,255,255,0.1)"></div>
<div class="a" style="left:451px;top:893.125px;width:1px;height:33.125px;background:rgba(255,255,255,0.1)"></div>
<div class="a" style="left:468px;top:893.125px;width:1px;height:33.125px;background:rgba(255,255,255,0.1)"></div>
<div class="a" style="left:485px;top:893.125px;width:1px;height:33.125px;background:rgba(255,255,255,0.3)"></div>
<div class="a" style="left:706px;top:893.12px;width:58px;height:20px;background:#2d5567"></div>
<div class="a" style="left:400px;top:892.92px;width:620px;height:20px;border-top:2px solid #5a566e;border-left:2px solid #5a566e"></div>
<div class="a" style="left:706px;top:892.92px;width:58px;height:2px;background:#5d7f90"></div>
<div class="a" style="left:764px;top:893.12px;width:3px;height:20px;background:#9b86ff"></div>
<svg class="a" style="left:402px;top:893.62px" width="14" height="16" viewBox="0 0 14 16"><path d="M4.5 12 Q4.5 9.5 3 8 A4.6 4.6 0 1 1 11 8 Q9.5 9.5 9.5 12" fill="none" stroke="#f2c400" stroke-width="1.6"/></svg>
<div class="a ln" style="left:311px;top:66.000px">1</div>
<div class="a code" style="left:400px;top:66.000px"><span class="k">name</span><span class="p">: </span><span class="v">Deploy Production - dangth</span></div>
<div class="a ln" style="left:311px;top:99.125px">2</div>
<div class="a ln" style="left:311px;top:132.250px">3</div>
<div class="a code" style="left:400px;top:132.250px"><span class="k">on</span><span class="p">:</span></div>
<div class="a ln" style="left:311px;top:165.375px">4</div>
<div class="a code" style="left:400px;top:165.375px">  <span class="k">push</span><span class="p">:</span></div>
<div class="a ln" style="left:311px;top:198.500px">5</div>
<div class="a code" style="left:400px;top:198.500px">    <span class="k">branches</span><span class="p">:</span></div>
<div class="a ln" style="left:311px;top:231.625px">6</div>
<div class="a code" style="left:400px;top:231.625px">      <span class="d">- </span><span class="v">release</span></div>
<div class="a ln" style="left:311px;top:264.750px">7</div>
<div class="a ln" style="left:311px;top:297.875px">8</div>
<div class="a code" style="left:400px;top:297.875px"><span class="k">jobs</span><span class="p">:</span></div>
<div class="a ln" style="left:311px;top:331.000px">9</div>
<div class="a code" style="left:400px;top:331.000px">  <span class="k">deploy</span><span class="p">:</span></div>
<div class="a ln" style="left:311px;top:364.125px">10</div>
<div class="a code" style="left:400px;top:364.125px">    <span class="k">runs-on</span><span class="p">: </span><span class="v">ubuntu-latest</span></div>
<div class="a ln" style="left:311px;top:397.250px">11</div>
<div class="a ln" style="left:311px;top:430.375px">12</div>
<div class="a code" style="left:400px;top:430.375px">    <span class="k">steps</span><span class="p">:</span></div>
<div class="a ln" style="left:311px;top:463.500px">13</div>
<div class="a code" style="left:400px;top:463.500px">      <span class="d">- </span><span class="k">name</span><span class="p">: </span><span class="v">Deploy to Production Server</span></div>
<div class="a ln" style="left:311px;top:496.625px">14</div>
<div class="a code" style="left:400px;top:496.625px">        <span class="k">uses</span><span class="p">: </span><span class="v">appleboy/ssh-action@v1.0.3</span></div>
<div class="a ln" style="left:311px;top:529.750px">15</div>
<div class="a code" style="left:400px;top:529.750px">        <span class="k">with</span><span class="p">:</span></div>
<div class="a ln" style="left:311px;top:562.875px">16</div>
<div class="a code" style="left:400px;top:562.875px">          <span class="k">host</span><span class="p">: </span><span class="v">${{ secrets.PROD_HOST }}</span></div>
<div class="a ln" style="left:311px;top:596.000px">17</div>
<div class="a code" style="left:400px;top:596.000px">          <span class="k">username</span><span class="p">: </span><span class="v">${{ secrets.PROD_USER }}</span></div>
<div class="a ln" style="left:311px;top:629.125px">18</div>
<div class="a code" style="left:400px;top:629.125px">          <span class="k">key</span><span class="p">: </span><span class="v">${{ secrets.PROD_KEY }}</span></div>
<div class="a ln" style="left:311px;top:662.250px">19</div>
<div class="a code" style="left:400px;top:662.250px">          <span class="k">script</span><span class="p">: </span><span class="d">|</span></div>
<div class="a ln" style="left:311px;top:695.375px">20</div>
<div class="a code" style="left:400px;top:695.375px">            <span class="v">set -e</span></div>
<div class="a ln" style="left:311px;top:728.500px">21</div>
<div class="a ln" style="left:311px;top:761.625px">22</div>
<div class="a code" style="left:400px;top:761.625px">            <span class="v">cd /root/projects/dangth</span></div>
<div class="a ln" style="left:311px;top:794.750px">23</div>
<div class="a ln" style="left:311px;top:827.875px">24</div>
<div class="a code" style="left:400px;top:827.875px">            <span class="v">echo &quot;</span><span style="display:inline-block;width:22px;height:10px"></span><span class="v"> Pull latest code&quot;</span></div>
<div class="a ln" style="left:311px;top:861.000px">25</div>
<div class="a code" style="left:400px;top:861.000px">            <span class="v">git fetch origin </span><span class="v">release</span></div>
<svg class="a" style="left:555px;top:835px" width="18" height="16" viewBox="0 0 18 16"><path d="M1 8.4 Q1 5 4.4 4.4 L6.9 1.3 Q8.4 0.2 9.6 1.4 Q10 2.6 9.4 4 H15.6 Q17.2 4.2 17 5.9 Q16.7 7.6 15 7.7 H12.4 Q13.2 9.4 12.2 10.5 Q12.6 12.2 11.4 13 Q11.2 15 9 15 H5.2 Q1 15 1 11 Z" fill="#fbb634"/><path d="M12.2 10.5 H9.6 M11.4 13 H9.4 M12.4 7.7 H10.4" stroke="#e89a1c" stroke-width="0.6" fill="none"/></svg></body></html>
